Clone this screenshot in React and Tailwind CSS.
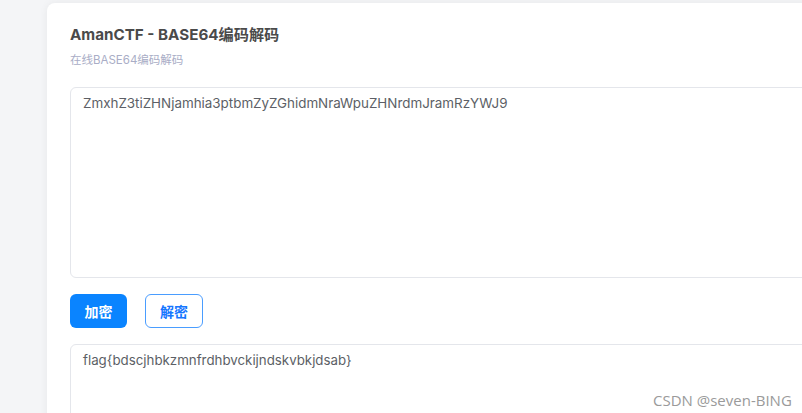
export default function App() {
  return (
    <div className="relative h-[413px] w-[802px] overflow-hidden bg-[#f4f5f7] font-['Inter','Noto_Sans_CJK_SC',sans-serif]">
      <div className="ml-[47px] mt-[3px] h-[440px] w-[800px] rounded-lg bg-white pl-[23px] pt-[20px] shadow-[0_0_8px_rgba(0,0,0,0.06)]">
        <h1 className="text-[15.2px] font-bold leading-[24px] text-[#4a4a4a]">
          AmanCTF - BASE64编码解码
        </h1>
        <p className="mt-[5px] text-[11.5px] leading-[16px] text-[#a9adc6]">
          在线BASE64编码解码
        </p>

        <textarea
          readOnly
          className="mt-[19px] block h-[191px] w-[760px] resize-none rounded-md border border-[#e4e6eb] px-[12px] py-[5px] text-[13.4px] leading-[21px] text-[#5c5f66] outline-none"
          value="ZmxhZ3tiZHNjamhia3ptbmZyZGhidmNraWpuZHNrdmJramRzYWJ9"
        />

        <div className="mt-[16px] flex gap-[18px]">
          <button className="h-[34px] w-[57px] rounded-md bg-[#0a84ff] text-[14px] font-bold text-white">
            加密
          </button>
          <button className="h-[34px] w-[58px] rounded-md border border-[#4a9dff] bg-white text-[14px] font-bold text-[#1677ff]">
            解密
          </button>
        </div>

        <textarea
          readOnly
          className="mt-[16px] block h-[120px] w-[760px] resize-none rounded-md border border-[#e4e6eb] px-[12px] py-[5px] text-[13.3px] leading-[21px] text-[#5c5f66] outline-none"
          value="flag{bdscjhbkzmnfrdhbvckijndskvbkjdsab}"
        />
      </div>

      <span className="absolute left-[653px] top-[389px] font-['Open_Sans',sans-serif] text-[15px] text-[#9a9a9a]">
        CSDN @seven-BING
      </span>
    </div>
  );
}
